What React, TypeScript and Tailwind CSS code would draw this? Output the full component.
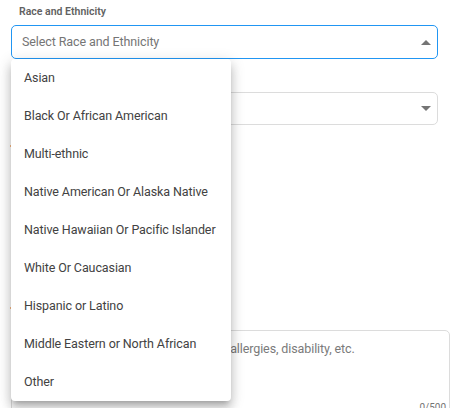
const options = [
  'Asian',
  'Black Or African American',
  'Multi-ethnic',
  'Native American Or Alaska Native',
  'Native Hawaiian Or Pacific Islander',
  'White Or Caucasian',
  'Hispanic or Latino',
  'Middle Eastern or North African',
  'Other',
]

function Caret({ up }: { up?: boolean }) {
  return (
    <svg width="10" height="5" viewBox="0 0 10 5" className="shrink-0">
      {up ? <path d="M0 5 L5 0 L10 5 Z" fill="#757575" /> : <path d="M0 0 L5 5 L10 0 Z" fill="#757575" />}
    </svg>
  )
}

export default function App() {
  return (
    <div
      className="relative w-[458px] h-[408px] overflow-hidden bg-white"
      style={{ fontFamily: 'Roboto, "Liberation Sans", sans-serif' }}
    >
      <div className="pt-[4px]">
        <div className="ml-[19px] h-[16px] text-[10.5px] font-semibold leading-[16px] text-[#616161]">
          Race and Ethnicity
        </div>
        <div className="ml-[11px] mt-[5px] flex h-[34px] w-[427px] items-center justify-between rounded-[5px] border-[1.5px] border-[#2196f3] pl-[10px] pr-[6px]">
          <span className="text-[12.5px] tracking-[-0.1px] text-[#757575]">Select Race and Ethnicity</span>
          <Caret up />
        </div>

        <div className="ml-[19px] mt-[9px] h-[16px] text-[10.5px] font-semibold leading-[16px] text-[#616161]">
          Gender
        </div>
        <div className="ml-[11px] mt-[8px] flex h-[33px] w-[427px] items-center justify-end rounded-[5px] border border-[#dcdcdc] pr-[6px]">
          <Caret />
        </div>

        <div className="ml-[10px] mt-[20px] h-[2px] w-[2px] rounded-full bg-[#f5a25d]" />
        <div className="ml-[10px] mt-[160px] h-[2px] w-[2px] rounded-full bg-[#f5a25d]" />

        <div className="ml-[11px] mt-[21px] h-[90px] w-[439px] rounded-[5px] border border-[#dcdcdc] px-[11px] pt-[5px]">
          <div className="relative h-full">
            <span className="text-[12.5px] leading-[16px] tracking-[-0.1px] text-[#7a7a7a]">
              Please list any special needs, such as allergies, disability, etc.
            </span>
            <span className="absolute bottom-[4px] right-[-8px] text-[10px] text-[#757575]">0/500</span>
          </div>
        </div>
      </div>

      <div className="absolute left-[11px] top-[59px] w-[220px] rounded-[4px] bg-white shadow-[0_5px_5px_-3px_rgba(0,0,0,0.2),0_8px_10px_1px_rgba(0,0,0,0.14),0_3px_14px_2px_rgba(0,0,0,0.12)]">
        {options.map((o) => (
          <div key={o} className="flex h-[38px] items-center pl-[13px] text-[12.5px] tracking-[-0.1px] text-[#424242]">
            {o}
          </div>
        ))}
      </div>
    </div>
  )
}
